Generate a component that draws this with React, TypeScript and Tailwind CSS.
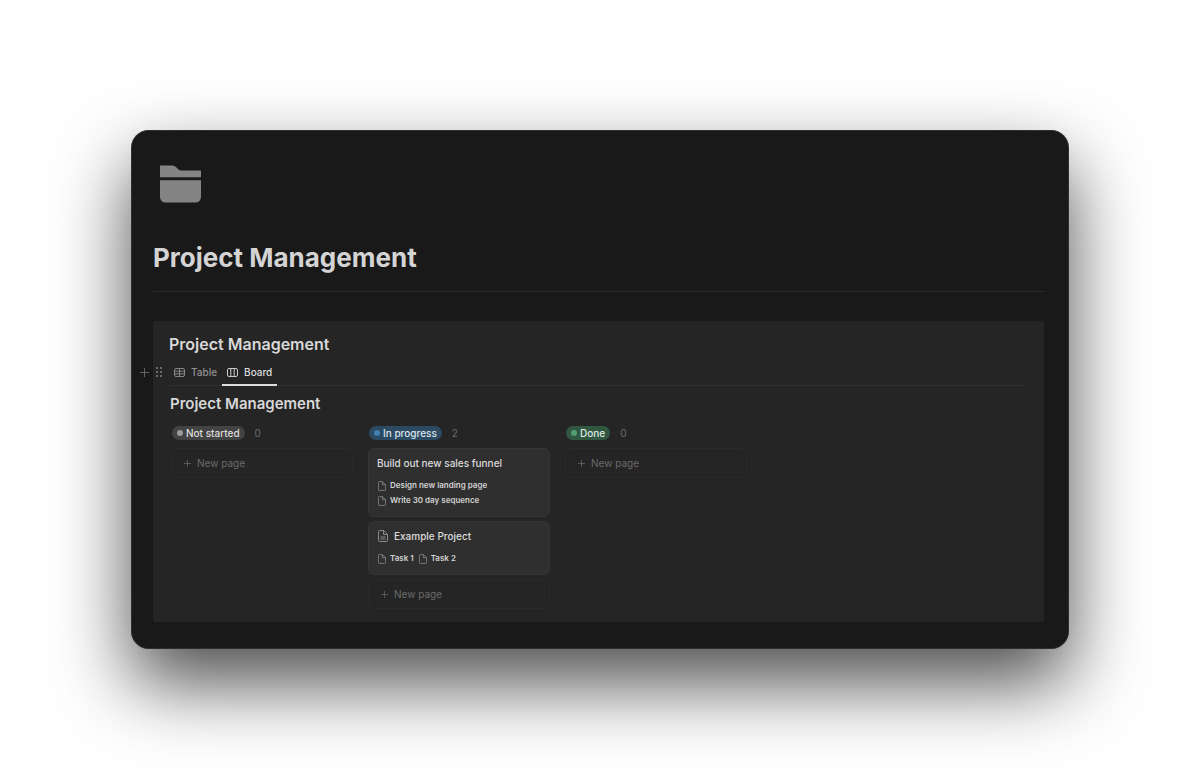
import { ReactNode } from 'react'

type TTask = { title: string; icon?: boolean; inline?: boolean; tasks: string[] }
type TColumn = { name: string; pill: string; dot: string; cards: TTask[] }

const columns: TColumn[] = [
	{
		name: 'Not started',
		pill: 'bg-[#434343] text-[#dedede]',
		dot: 'bg-[#9b9b9b]',
		cards: [],
	},
	{
		name: 'In progress',
		pill: 'bg-[#2d4a63] text-[#dbe3ea]',
		dot: 'bg-[#447fb2]',
		cards: [
			{
				title: 'Build out new sales funnel',
				tasks: ['Design new landing page', 'Write 30 day sequence'],
			},
			{
				title: 'Example Project',
				icon: true,
				inline: true,
				tasks: ['Task 1', 'Task 2'],
			},
		],
	},
	{
		name: 'Done',
		pill: 'bg-[#315741] text-[#dde9e1]',
		dot: 'bg-[#529e72]',
		cards: [],
	},
]

function FolderIcon() {
	return (
		<svg width="41" height="38" viewBox="0 0 41 38" fill="#848484">
			<path d="M0 .5H11.5C14 .5 15.2 1.2 16.5 2.500L18 4C19.300 5.200 20.200 5.500 22 5.500H41V12.200H0Z" />
			<path d="M0 15.300H41V31.500Q41 37.500 35 37.500H6Q0 37.500 0 31.500Z" />
		</svg>
	)
}

function PageIcon({ lines = false }: { lines?: boolean }) {
	return (
		<svg
			className={lines ? 'ml-px h-3 w-[10px] shrink-0' : 'ml-px h-[10px] w-2 shrink-0'}
			viewBox="0 0 10 12"
			fill="none"
			stroke="#8c8c8c"
			strokeWidth="1"
			strokeLinejoin="round"
		>
			<path d="M1.500 .5H5.500L9.500 4.500V10.500Q9.500 11.500 8.500 11.500H1.500Q.5 11.500 .5 10.500V1.500Q.5 .5 1.500 .5Z" />
			<path d="M5.500 .5V4.500H9.500" />
			{lines && <path d="M2.500 7H7.500M2.500 9H7.500" />}
		</svg>
	)
}

function PlusIcon({ className }: { className: string }) {
	return (
		<svg className={className} viewBox="0 0 10 10" fill="none" stroke="currentColor">
			<path d="M5 0V10M0 5H10" />
		</svg>
	)
}

function Tab({ active, icon, children }: { active?: boolean; icon: ReactNode; children: ReactNode }) {
	return (
		<button
			role="tab"
			aria-selected={!!active}
			className={
				active
					? '-mb-px flex items-center gap-[6px] border-b-2 border-[#dcdcdc] px-[5px] pb-1 text-[10px] leading-4 font-medium text-[#dcdcdc]'
					: '-mb-px flex items-center gap-[6px] border-b-2 border-transparent px-[5px] pb-1 text-[10px] leading-4 font-medium text-[#919191]'
			}
		>
			{icon}
			{children}
		</button>
	)
}

function Card({ card }: { card: TTask }) {
	return (
		<article className="rounded-md border border-[#353535] bg-[#2f2f2f] px-2 pt-[6px] pb-2">
			<h4 className="flex items-center gap-[6px] text-[10px] leading-4 font-medium text-[#dcdcdc]">
				{card.icon && <PageIcon lines />}
				{card.title}
			</h4>
			<ul className={card.inline ? 'mt-[7px] flex gap-1' : 'mt-[7px]'}>
				{card.tasks.map((task) => (
					<li key={task} className="flex items-center gap-1 text-[8px] leading-[15px] font-semibold text-[#d2d2d2]">
						<PageIcon />
						{task}
					</li>
				))}
			</ul>
		</article>
	)
}

function Column({ column }: { column: TColumn }) {
	return (
		<section className="w-[182px]">
			<header className="flex items-center gap-[10px] pl-[1px] text-[10px] leading-[14px]">
				<h3 className={`flex items-center gap-[3px] rounded-full px-[5px] font-medium ${column.pill}`}>
					<span className={`size-[6px] rounded-full ${column.dot}`} />
					{column.name}
				</h3>
				<span className="text-[#6b6b6b]">{column.cards.length}</span>
			</header>
			<div className="mt-2 flex flex-col gap-1">
				{column.cards.map((card) => (
					<Card key={card.title} card={card} />
				))}
				<button className="flex h-[30px] items-center gap-[6px] rounded-md border border-[#2a2a2a] px-3 text-[10px] text-[#6b6b6b]">
					<PlusIcon className="size-[7px]" />
					New page
				</button>
			</div>
		</section>
	)
}

export default function App() {
	return (
		<main className="min-h-screen bg-white px-[131px] py-[130px] font-['Inter',sans-serif]">
			<div className="rounded-[18px] bg-[#191919] pt-[35px] pr-[25px] pb-[27px] pl-[22px] shadow-[inset_0_0_0_1px_rgba(80,80,80,0.4),0_34px_76px_rgba(0,0,0,0.7)]">
				<div className="pl-[7px]">
					<FolderIcon />
				</div>
				<h1 className="mt-[37px] text-[26px] leading-9 font-bold text-[#d4d4d4]">Project Management</h1>
				<hr className="mt-[15px] border-[#2b2b2b]" />
				<div className="relative mt-[29px] rounded-[3px] bg-[#252525] px-4 pt-3 pb-[13px]">
					<div className="absolute top-[46px] -left-[13px] flex items-center gap-[7px] text-[#6b6b6b]">
						<button aria-label="Add block">
							<PlusIcon className="size-[9px]" />
						</button>
						<button aria-label="Drag block">
							<svg width="6" height="10" viewBox="0 0 6 10" fill="currentColor">
								<path d="M0 0h2v2H0zM4 0h2v2H4zM0 4h2v2H0zM4 4h2v2H4zM0 8h2v2H0zM4 8h2v2H4z" />
							</svg>
						</button>
					</div>
					<h2 className="text-[16px] leading-[22px] font-semibold text-[#d8d8d8]">Project Management</h2>
					<div role="tablist" className="mt-[9px] mr-1 flex border-b border-[#303030]">
						<Tab
							icon={
								<svg width="11" height="9" viewBox="0 0 11 9" fill="none" stroke="currentColor" strokeWidth=".9">
									<rect x=".5" y=".5" width="10" height="8" rx="1.500" />
									<path d="M.5 3.200H10.500M.5 5.800H10.500M5.500 .5V8.500" />
								</svg>
							}
						>
							Table
						</Tab>
						<Tab
							active
							icon={
								<svg width="11" height="9" viewBox="0 0 11 9" fill="none" stroke="currentColor" strokeWidth=".9">
									<rect x=".5" y=".5" width="10" height="8" rx="1.500" />
									<path d="M3.800 .5V8.500M7.200 .5V8.500" />
								</svg>
							}
						>
							Board
						</Tab>
					</div>
					<h2 className="mt-2 pl-[1px] text-[15px] leading-5 font-semibold text-[#d8d8d8]">Project Management</h2>
					<div className="mt-3 flex gap-[15px] pl-[2px]">
						{columns.map((column) => (
							<Column key={column.name} column={column} />
						))}
					</div>
				</div>
			</div>
		</main>
	)
}
